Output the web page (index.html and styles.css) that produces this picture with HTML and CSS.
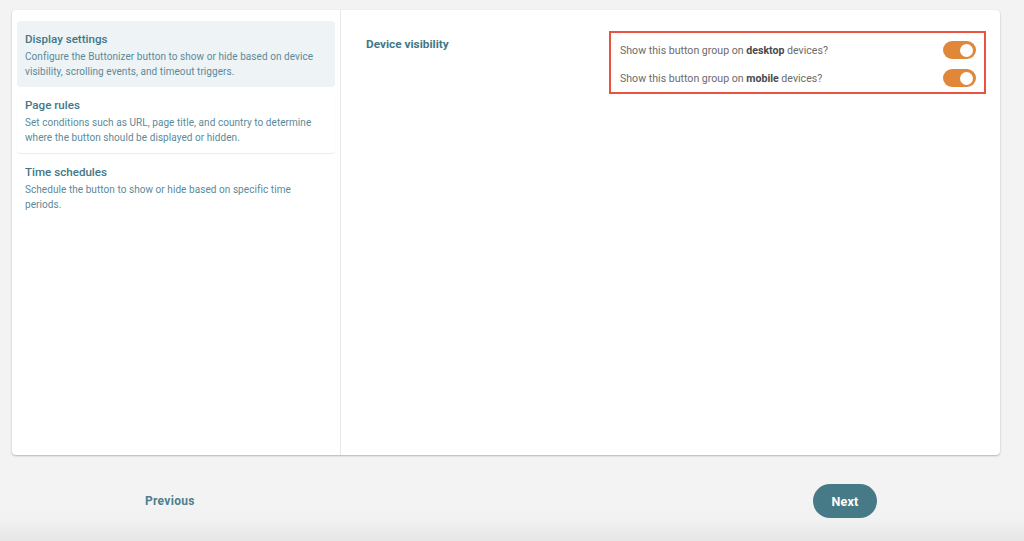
FILE: index.html
```html
<!DOCTYPE html>
<html lang="en">
<head>
<meta charset="utf-8">
<title>Display settings</title>
<link rel="stylesheet" href="styles.css">
</head>
<body>
<div class="page">
  <div class="card">
    <nav class="sidebar">
      <div class="nav-item active">
        <div class="nav-title">Display settings</div>
        <div class="nav-desc">Configure the Buttonizer button to show or hide based on device visibility, scrolling events, and timeout triggers.</div>
      </div>
      <div class="nav-item raised">
        <div class="nav-title">Page rules</div>
        <div class="nav-desc">Set conditions such as URL, page title, and country to determine where the button should be displayed or hidden.</div>
      </div>
      <div class="nav-item">
        <div class="nav-title">Time schedules</div>
        <div class="nav-desc">Schedule the button to show or hide based on specific time periods.</div>
      </div>
    </nav>
    <section class="content">
      <div class="setting">
        <div class="setting-label">Device visibility</div>
        <div class="highlight">
          <div class="row">
            <span class="row-text">Show this button group on <b>desktop</b> devices?</span>
            <span class="switch"><span class="knob"></span></span>
          </div>
          <div class="row">
            <span class="row-text">Show this button group on <b>mobile</b> devices?</span>
            <span class="switch"><span class="knob"></span></span>
          </div>
        </div>
      </div>
    </section>
  </div>
  <div class="footer">
    <button class="btn-prev">Previous</button>
    <button class="btn-next">Next</button>
  </div>
</div>
</body>
</html>
```

FILE: styles.css
```css
* { box-sizing: border-box; }
html, body { margin: 0; padding: 0; }
body {
  font-family: Roboto, "Liberation Sans", Arial, sans-serif;
  background: linear-gradient(to bottom, #f3f3f3 0, #f3f3f3 505px, #f1f1f1 520px, #e6e6e6 541px);
  height: 541px;
  overflow: hidden;
}
.page {
  padding: 10px 24px 0 12px;
}
.card {
  display: flex;
  height: 445px;
  background: #fff;
  border-radius: 4px;
  box-shadow: 0 1px 2px rgba(0,0,0,0.25), 0 0 1px rgba(0,0,0,0.08);
}
.sidebar {
  width: 329px;
  flex: none;
  border-right: 1px solid #e8e8e8;
  padding: 11px 5px 0 5px;
  display: flex;
  flex-direction: column;
}
.nav-item {
  padding: 10px 12px 8px 8px;
  border-radius: 4px;
  color: #4d7f8e;
}
.nav-item.active {
  background: #eef3f6;
}
.nav-item.raised {
  box-shadow: 0 1px 1px rgba(0,0,0,0.08);
  margin-bottom: 1px;
}
.nav-title {
  font-size: 11.6px;
  line-height: 16px;
  font-weight: 500;
  color: #437786;
}
.nav-desc {
  margin-top: 2px;
  font-size: 10px;
  line-height: 15px;
  letter-spacing: 0.06px;
  color: #5b8a98;
}
.content {
  flex: 1;
  padding: 21px 14px 0 25px;
}
.setting {
  display: flex;
  justify-content: space-between;
  align-items: flex-start;
}
.setting-label {
  margin-top: 5px;
  font-size: 11.8px;
  line-height: 16px;
  font-weight: 700;
  color: #437786;
}
.highlight {
  width: 377px;
  border: 2px solid #e9533f;
  padding: 3px 8px 0 9px;
}
.row {
  height: 28px;
  display: flex;
  align-items: center;
  justify-content: space-between;
}
.row-text {
  font-size: 10.6px;
  color: #6b6b6b;
}
.row-text b {
  font-weight: 700;
  color: #4a4a4a;
}
.switch {
  width: 33px;
  height: 18px;
  border-radius: 9px;
  background: #e0873a;
  display: flex;
  align-items: center;
  justify-content: flex-end;
  padding-right: 3px;
}
.knob {
  width: 13px;
  height: 13px;
  border-radius: 50%;
  background: #fff;
}
.footer {
  display: flex;
  align-items: center;
  justify-content: space-between;
  margin-top: 29px;
  padding: 0 123px 0 133px;
}
.btn-prev {
  font-family: inherit;
  background: none;
  border: none;
  padding: 0;
  font-size: 12px;
  font-weight: 700;
  color: #4d7f8e;
  letter-spacing: 0.3px;
}
.btn-next {
  font-family: inherit;
  width: 64px;
  height: 34px;
  border: none;
  border-radius: 17px;
  background: #477a87;
  color: #fff;
  font-size: 12.5px;
  font-weight: 700;
  letter-spacing: 0.2px;
}
```
